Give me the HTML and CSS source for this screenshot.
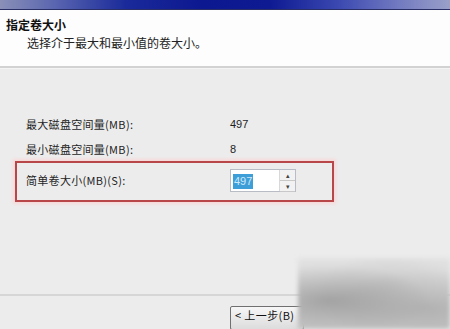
FILE: index.html
```
<!DOCTYPE html>
<html lang="zh">
<head>
<meta charset="utf-8">
<link rel="stylesheet" href="styles.css">
</head>
<body>
<div class="window">
  <div class="titlebar"></div>
  <div class="header">
    <div class="title">指定卷大小</div>
    <div class="subtitle">选择介于最大和最小值的卷大小。</div>
  </div>
  <div class="sep"></div>
  <div class="content">
    <div class="row"><span class="label">最大磁盘空间量(MB):</span><span class="value">497</span></div>
    <div class="row"><span class="label">最小磁盘空间量(MB):</span><span class="value">8</span></div>
    <div class="highlight">
      <div class="row row-input">
        <span class="label">简单卷大小(MB)(S):</span>
        <div class="spin">
          <div class="spin-field"><span class="sel">497</span></div>
          <div class="spin-btns">
            <div class="spin-btn">▴</div>
            <div class="spin-btn">▾</div>
          </div>
        </div>
      </div>
    </div>
  </div>
  <div class="footer">
    <div class="btn">&lt; 上一步(B)</div>
  </div>
  <div class="watermark"></div>
</div>
</body>
</html>
```
FILE: styles.css
```
* { box-sizing: border-box; }
html, body { margin: 0; padding: 0; }
body {
  width: 450px;
  height: 329px;
  overflow: hidden;
  background: #ececec;
  font-family: "Noto Sans CJK SC", "Liberation Sans", sans-serif;
  color: #1e1e1e;
}
.window { position: relative; width: 450px; height: 329px; }
.titlebar {
  height: 10px;
  background: linear-gradient(90deg, #8a90b8 0%, #5a66b0 12%, #1a2a9a 28%, #0c1890 45%, #0e1a92 60%, #3a48b0 75%, #7078c0 88%, #9aa0c8 100%);
  border-bottom: 1px solid #2a2f66;
}
.header {
  background: #fdfdfd;
  height: 56px;
  padding: 7px 0 0 6px;
}
.title {
  font-size: 12px;
  font-weight: bold;
  line-height: 16px;
  color: #111;
}
.subtitle {
  font-size: 12px;
  line-height: 16px;
  margin: 2px 0 0 21px;
  color: #222;
}
.sep {
  height: 3px;
  border-top: 2px solid #d2d2d2;
  background: #f4f4f4;
}
.content {
  height: 227px;
  padding: 42px 0 0 15px;
  border-bottom: 2px solid #d6d6d6;
}
.row {
  display: flex;
  align-items: center;
  height: 25px;
  font-size: 11px;
  padding-left: 11px;
}
.label { width: 204px; letter-spacing: 0.3px; }
.value { font-family: "Liberation Sans", sans-serif; font-size: 11px; }
.highlight {
  width: 319px;
  height: 41px;
  border: 2px solid #b8474a;
  box-shadow: 0 0 3px 2px #f8d8d8;
  padding-top: 5px;
}
.row-input { padding-left: 9px; height: 24px; }
.spin {
  display: flex;
  height: 23px;
  border: 1px solid #b8bcc4;
  background: #fff;
  width: 66px;
}
.spin-field {
  flex: 1;
  padding: 2px 0 0 2px;
}
.sel {
  display: inline-block;
  background: #3e9fd8;
  color: #cfe8f8;
  font-family: "Liberation Sans", sans-serif;
  font-size: 11px;
  line-height: 15px;
  padding: 0 1px;
}
.spin-btns {
  width: 16px;
  display: flex;
  flex-direction: column;
  border-left: 1px solid #d8d8d8;
}
.spin-btn {
  flex: 1;
  font-size: 7px;
  line-height: 10px;
  text-align: center;
  color: #444;
  background: #f2f2f2;
  border-bottom: 1px solid #c8c8c8;
}
.footer {
  height: 31px;
  padding: 10px 0 0 230px;
  background: #ececec;
}
.btn {
  width: 74px;
  height: 24px;
  border: 1px solid #707070;
  border-radius: 2px;
  background: linear-gradient(#f6f6f6, #dcdcdc);
  font-size: 11px;
  line-height: 16px;
  padding-left: 4px;
  letter-spacing: 0.4px;
  color: #111;
}
.watermark {
  position: absolute;
  left: 298px;
  top: 258px;
  width: 152px;
  height: 71px;
  background:
    radial-gradient(ellipse at 20% 60%, rgba(130,130,130,0.6), rgba(130,130,130,0) 60%),
    radial-gradient(ellipse at 60% 40%, rgba(190,190,190,0.5), rgba(190,190,190,0) 55%),
    radial-gradient(ellipse at 85% 70%, rgba(150,150,150,0.55), rgba(150,150,150,0) 55%),
    linear-gradient(180deg, #e2e2e2, #cacaca);
  filter: blur(2px);
}
```
